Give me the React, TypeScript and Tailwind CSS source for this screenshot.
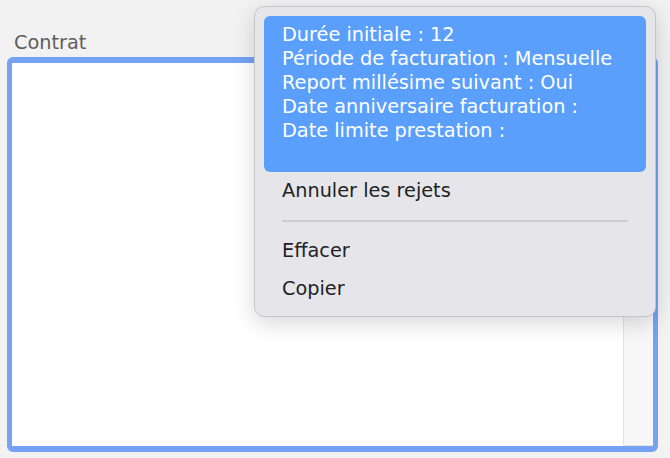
const details = [
  'Durée initiale : 12',
  'Période de facturation : Mensuelle',
  'Report millésime suivant : Oui',
  'Date anniversaire facturation :',
  'Date limite prestation :',
]

function ContextMenu() {
  return (
    <div className="absolute left-[254px] top-[6px] w-[402px] h-[311px] rounded-[10px] border border-[#c6c6ca] bg-[#e6e6ea] p-[9px] shadow-[0_6px_22px_rgba(0,0,0,0.16)]">
      <div className="h-[156px] rounded-[6px] bg-[#5a9ffc] pl-[18px] pt-[7px] text-white">
        {details.map((line) => (
          <div key={line} className="h-[24px] whitespace-nowrap">
            {line}
          </div>
        ))}
      </div>
      <div className="flex h-[38px] items-center px-[18px] text-[#222]">Annuler les rejets</div>
      <div className="mx-[18px] my-[10px] h-[2px] bg-[#cdcdd1]" />
      <div className="flex h-[38px] items-center px-[18px] text-[#222]">Effacer</div>
      <div className="flex h-[38px] items-center px-[18px] text-[#222]">Copier</div>
    </div>
  )
}

export default function App() {
  return (
    <div className="relative h-[458px] w-[670px] overflow-hidden bg-[#f2f2f2] font-['DejaVu_Sans',sans-serif] text-[19.3px] leading-[24px]">
      <div className="pl-[14px] pt-[31px] text-[#5e5e5e]">Contrat</div>
      <div className="ml-[7px] mt-[2px] flex h-[395px] w-[651px] justify-end rounded-[6px] border-x-[5px] border-y-[6px] border-[#75a2f5] bg-white">
        <div className="w-[30px] border-b border-l border-[#e2e2e2] bg-[#f7f7f7]" />
      </div>
      <ContextMenu />
    </div>
  )
}
